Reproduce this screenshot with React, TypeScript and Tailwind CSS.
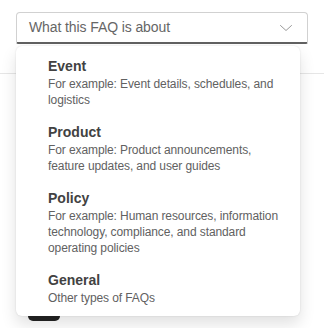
const options = [
  {
    title: "Event",
    lines: ["For example: Event details, schedules, and", "logistics"],
  },
  {
    title: "Product",
    lines: ["For example: Product announcements,", "feature updates, and user guides"],
  },
  {
    title: "Policy",
    lines: [
      "For example: Human resources, information",
      "technology, compliance, and standard",
      "operating policies",
    ],
  },
  {
    title: "General",
    lines: ["Other types of FAQs"],
  },
];

export default function App() {
  return (
    <div
      className="relative h-[328px] w-[324px] overflow-hidden bg-white"
      style={{ fontFamily: '"Segoe UI", "Liberation Sans", Arial, sans-serif' }}
    >
      {/* form underneath the menu */}
      <div className="px-4 pt-3">
        <div className="flex h-[32px] items-center justify-between rounded-t-[4px] rounded-b-[2px] border border-[#d1d1d1] border-b-2 border-b-[#616161] bg-white pl-3 pr-3">
          <span className="text-[14px] tracking-[-0.1px] text-[#666666]">What this FAQ is about</span>
          <svg width="14" height="14" viewBox="0 0 14 14" fill="none" className="mr-[2px]">
            <path d="M1.5 4.5 L7 9.5 L12.5 4.5" stroke="#9a9a9a" strokeWidth="1" strokeLinecap="round" strokeLinejoin="round" />
          </svg>
        </div>
        <div className="mt-[29px] -mx-4 h-px bg-[#e6e6e6]" />
        <div className="ml-3 mt-[237px] h-[10px] w-[32px] rounded-[5px] bg-[#242424]" />
      </div>

      {/* dropdown listbox */}
      <div className="absolute left-4 top-[46px] w-[284px] rounded-[6px] bg-white py-[3px] shadow-[0_0_2px_rgba(0,0,0,0.12),0_8px_16px_rgba(0,0,0,0.12)]">
        {options.map((o) => (
          <div key={o.title} className="py-[7px] pl-8 pr-2">
            <div className="text-[14px] font-semibold leading-[20px] text-[#424242]">{o.title}</div>
            {o.lines.map((l) => (
              <div key={l} className="whitespace-nowrap text-[12px] leading-[16px] tracking-[-0.1px] text-[#616161]">
                {l}
              </div>
            ))}
          </div>
        ))}
      </div>
    </div>
  );
}
